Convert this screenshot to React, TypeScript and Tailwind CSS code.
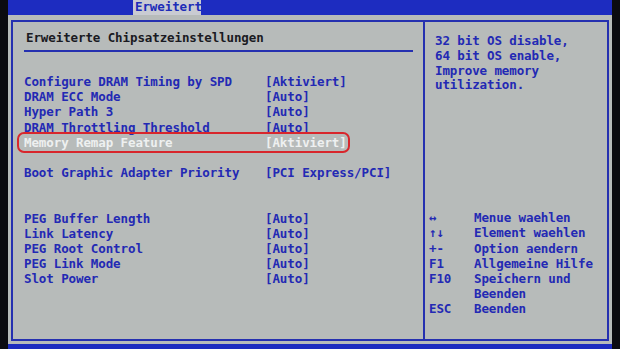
const mono = { fontFamily: '"DejaVu Sans Mono", "Liberation Mono", monospace' };

type Row = { label: string; value: string; active?: boolean } | null;

const rows: Row[] = [
  { label: "Configure DRAM Timing by SPD", value: "[Aktiviert]" },
  { label: "DRAM ECC Mode", value: "[Auto]" },
  { label: "Hyper Path 3", value: "[Auto]" },
  { label: "DRAM Throttling Threshold", value: "[Auto]" },
  { label: "Memory Remap Feature", value: "[Aktiviert]", active: true },
  null,
  { label: "Boot Graphic Adapter Priority", value: "[PCI Express/PCI]" },
  null,
  null,
  { label: "PEG Buffer Length", value: "[Auto]" },
  { label: "Link Latency", value: "[Auto]" },
  { label: "PEG Root Control", value: "[Auto]" },
  { label: "PEG Link Mode", value: "[Auto]" },
  { label: "Slot Power", value: "[Auto]" },
];

const keys: [string, string][] = [
  ["↔", "Menue waehlen"],
  ["↑↓", "Element waehlen"],
  ["+-", "Option aendern"],
  ["F1", "Allgemeine Hilfe"],
  ["F10", "Speichern und"],
  ["", "Beenden"],
  ["ESC", "Beenden"],
];

export default function App() {
  return (
    <div
      className="flex h-[349px] w-[620px] overflow-hidden bg-[#0b0b10] font-bold text-[12.5px] tracking-[-0.1px]"
      style={mono}
    >
      <div className="w-[8px] shrink-0" />
      <div className="flex w-[604px] shrink-0 flex-col bg-[#b7bbba]">
        <div className="flex h-[15px] shrink-0 bg-[#1d2cc0]">
          <div className="w-[125px]" />
          <div className="flex h-[15px] w-[68px] items-center bg-[#c9cbd2] pl-[2px] leading-none text-[#1d2cb8]">
            Erweitert
          </div>
        </div>

        <div className="mx-[3px] mt-[5px] flex h-[321px] border-2 border-[#2530b0]">
          <div className="relative flex w-[412px] shrink-0 flex-col border-r-2 border-[#2530b0] pl-[11px] pr-[10px]">
            <div className="mt-[8px] h-[15px] pl-[2px] leading-[15px] text-[#1a1a22]">
              Erweiterte Chipsatzeinstellungen
            </div>
            <div className="mt-[5px] h-[2px] bg-[#2530b0]" />
            <div className="mt-[22px] flex flex-col">
              {rows.map((r, i) =>
                r ? (
                  <div
                    key={i}
                    className={`flex h-[15.2px] leading-[15.2px] whitespace-pre ${
                      r.active ? "text-[#eef0f0]" : "text-[#2329b4]"
                    }`}
                  >
                    <span className="w-[241px] shrink-0">{r.label}</span>
                    <span>{r.value}</span>
                  </div>
                ) : (
                  <div key={i} className="h-[15.2px]" />
                )
              )}
            </div>
            <div className="absolute left-[4px] top-[110px] h-[21px] w-[333px] rounded-[7px] border-2 border-[#d8262c]" />
          </div>

          <div className="flex flex-1 flex-col pl-[10px] text-[#2329b4]">
            <div className="mt-[12px] flex flex-col leading-[14.8px]">
              <span>32 bit OS disable,</span>
              <span>64 bit OS enable,</span>
              <span>Improve memory</span>
              <span>utilization.</span>
            </div>
            <div className="mt-[117px] flex flex-col">
              {keys.map(([k, d], i) => (
                <div key={i} className="-ml-[6px] flex h-[15.2px] leading-[15.2px]">
                  <span className="w-[45px] shrink-0">{k}</span>
                  <span>{d}</span>
                </div>
              ))}
            </div>
          </div>
        </div>

        <div className="mt-[3px] flex-1 bg-[#1d2cc0]" />
      </div>
      <div className="flex-1" />
    </div>
  );
}
